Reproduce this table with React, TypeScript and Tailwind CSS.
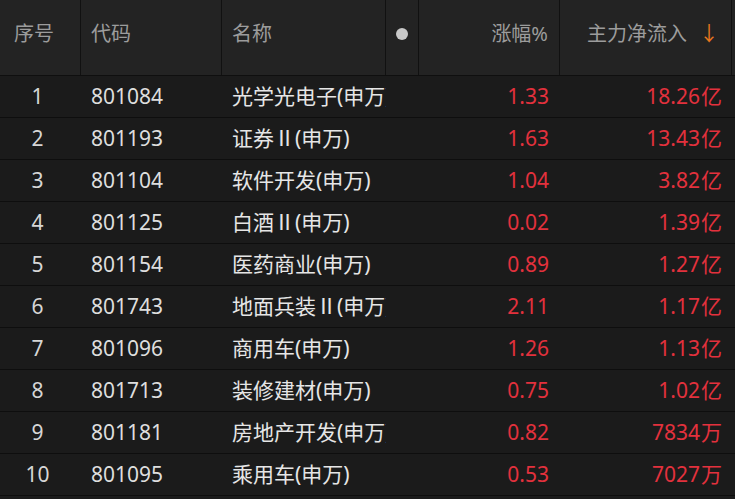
const rows: { code: string; name: string; pct: string; flow: string; unit: string }[] = [
  { code: '801084', name: '光学光电子(申万)', pct: '1.33', flow: '18.26', unit: '亿' },
  { code: '801193', name: '证券Ⅱ(申万)', pct: '1.63', flow: '13.43', unit: '亿' },
  { code: '801104', name: '软件开发(申万)', pct: '1.04', flow: '3.82', unit: '亿' },
  { code: '801125', name: '白酒Ⅱ(申万)', pct: '0.02', flow: '1.39', unit: '亿' },
  { code: '801154', name: '医药商业(申万)', pct: '0.89', flow: '1.27', unit: '亿' },
  { code: '801743', name: '地面兵装Ⅱ(申万)', pct: '2.11', flow: '1.17', unit: '亿' },
  { code: '801096', name: '商用车(申万)', pct: '1.26', flow: '1.13', unit: '亿' },
  { code: '801713', name: '装修建材(申万)', pct: '0.75', flow: '1.02', unit: '亿' },
  { code: '801181', name: '房地产开发(申万)', pct: '0.82', flow: '7834', unit: '万' },
  { code: '801095', name: '乘用车(申万)', pct: '0.53', flow: '7027', unit: '万' },
]

const cols = 'grid grid-cols-[81px_141px_164px_33px_141px_172px_1fr]'

export default function App() {
  return (
    <div
      className="w-[735px] h-[499px] overflow-hidden bg-[#1b1b1b] text-[21px]"
      style={{ fontFamily: '"Noto Sans", "Noto Sans CJK SC", sans-serif' }}
    >
      {/* Header */}
      <div className={`${cols} h-[76px] bg-[#232323] border-b border-[#0f0f0f] text-[#9c9c9c] text-[20px]`}>
        <div className="flex items-center pb-[8px] pl-[14px] border-r border-[#111]">序号</div>
        <div className="flex items-center pb-[8px] pl-[10px] border-r border-[#111]">代码</div>
        <div className="flex items-center pb-[8px] pl-[10px] border-r border-[#111]">名称</div>
        <div className="flex items-center justify-center pb-[8px] border-r border-[#111]">
          <span className="w-[12px] h-[12px] rounded-full bg-[#c8c8c8]" />
        </div>
        <div className="flex items-center justify-end pb-[8px] pr-[11px] border-r border-[#111]">涨幅%</div>
        <div className="flex items-center justify-end pb-[8px] pr-[12px] border-r border-[#111]">
          主力净流入<span className="ml-[12px] text-[#e8761e]">↓</span>
        </div>
        <div />
      </div>

      {/* Rows */}
      {rows.map((r, i) => (
        <div key={r.code} className={`${cols} h-[42px] border-b border-[#0e0e0e] items-center`}>
          <div className="text-center pr-[6px] text-[#d6d6d6]">{i + 1}</div>
          <div className="pl-[10px] text-[#dedede]">{r.code}</div>
          <div className="pl-[10px] text-[#e6e6e6] whitespace-nowrap overflow-hidden">{r.name}</div>
          <div />
          <div className="text-right pr-[11px] text-[#e3313d]">{r.pct}</div>
          <div className="text-right pr-[10px] text-[#e3313d]">
            {r.flow}
            <span className="ml-[1px]">{r.unit}</span>
          </div>
          <div />
        </div>
      ))}
    </div>
  )
}
